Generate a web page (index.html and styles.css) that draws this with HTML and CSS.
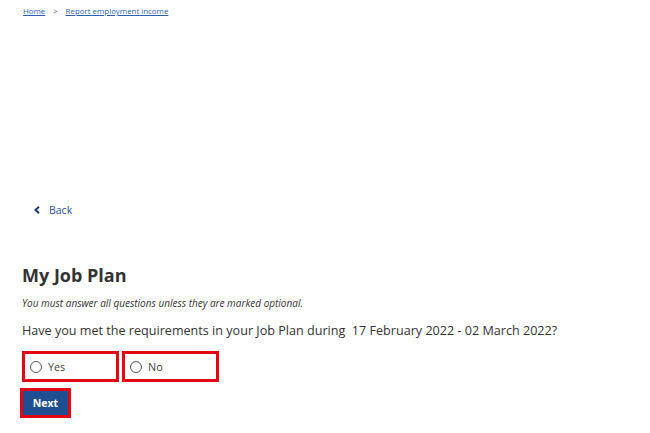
FILE: index.html
```html
<!DOCTYPE html>
<html lang="en">
<head>
<meta charset="utf-8">
<title>My Job Plan</title>
<link rel="stylesheet" href="styles.css">
</head>
<body>
<nav class="crumbs">
  <a href="#" class="crumb">Home</a>
  <span class="sep">&gt;</span>
  <a href="#" class="crumb">Report employment income</a>
</nav>
<main class="content">
  <a href="#" class="back">
    <svg class="chev" width="6" height="8" viewBox="0 0 6 8"><path d="M5 0.8 L1.5 4 L5 7.2" fill="none" stroke="#1d3f80" stroke-width="2"/></svg>
    Back
  </a>
  <h1 class="title">My Job Plan</h1>
  <p class="note">You must answer all questions unless they are marked optional.</p>
  <p class="question">Have you met the requirements in your Job Plan during &nbsp;17 February 2022 - 02 March 2022?</p>
  <div class="options">
    <label class="opt"><span class="radio"></span>Yes</label>
    <label class="opt"><span class="radio"></span>No</label>
  </div>
  <div class="actions">
    <button class="next">Next</button>
  </div>
</main>
</body>
</html>
```
FILE: styles.css
```css
html, body { margin: 0; padding: 0; background: #fff; }
body { font-family: "Open Sans", "Noto Sans", sans-serif; color: #333; }
.crumbs { display: flex; align-items: center; gap: 8px; padding: 4px 0 0 23px; font-size: 7.9px; height: 14px; }
.crumb { color: #2b5fb4; text-decoration: underline; }
.sep { color: #555; font-size: 7.5px; }
.content { padding: 0 0 0 22px; }
.back { display: inline-flex; align-items: center; gap: 9px; margin: 185px 0 0 12px; font-size: 10.5px; color: #1f4f9a; text-decoration: none; }
.title { font-size: 18px; font-weight: 700; margin: 44px 0 0; line-height: 24px; color: #333; }
.note { font-style: italic; font-size: 10px; margin: 9px 0 0; line-height: 14px; color: #333; }
.question { font-size: 12.6px; margin: 12px 0 0; line-height: 18px; color: #333; }
.options { display: flex; gap: 3px; margin: 11px 0 0 0; }
.opt { box-sizing: border-box; width: 97px; height: 31px; border: 3px solid #e30613; display: flex; align-items: center; gap: 6px; padding-left: 5px; font-size: 10.8px; color: #444; }
.radio { width: 12px; height: 12px; border: 1.4px solid #555; border-radius: 50%; box-sizing: border-box; }
.actions { margin: 6px 0 0 -2px; }
.next { box-sizing: border-box; width: 51px; height: 30px; border: 3px solid #e30613; background: #1f4f91; color: #fff; font-family: "Open Sans", sans-serif; font-weight: 700; font-size: 10.5px; padding: 0; }
```
